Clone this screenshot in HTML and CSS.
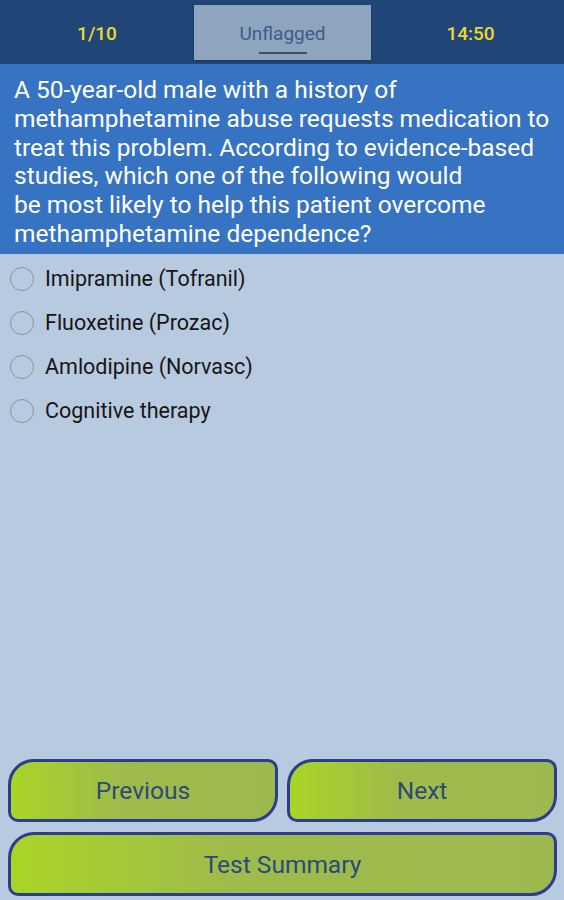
FILE: index.html
```html
<!DOCTYPE html>
<html lang="en">
<head>
  <meta charset="UTF-8" />
  <title>Question 1</title>
  <link rel="stylesheet" href="styles.css">
</head>
<body>
  <header class="topbar">
    <div class="counter">1/10</div>
    <div class="flag-tab">
      <span>Unflagged</span>
      <i class="flag-line"></i>
    </div>
    <div class="counter">14:50</div>
  </header>
  <section class="question">
    A 50-year-old male with a history of<br>
    methamphetamine abuse requests medication to<br>
    treat this problem. According to evidence-based<br>
    studies, which one of the following would<br>
    be most likely to help this patient overcome<br>
    methamphetamine dependence?
  </section>
  <main class="answers">
    <label class="option"><span class="radio"></span>Imipramine (Tofranil)</label>
    <label class="option"><span class="radio"></span>Fluoxetine (Prozac)</label>
    <label class="option"><span class="radio"></span>Amlodipine (Norvasc)</label>
    <label class="option"><span class="radio"></span>Cognitive therapy</label>
  </main>
  <footer class="nav">
    <div class="nav-row">
      <button class="btn">Previous</button>
      <button class="btn">Next</button>
    </div>
    <button class="btn wide">Test Summary</button>
  </footer>
</body>
</html>
```

FILE: styles.css
```css
html, body {
  margin: 0;
  height: 100%;
}
body {
  font-family: Roboto, "Noto Sans", sans-serif;
  background-color: #b8cae0;
  display: flex;
  flex-direction: column;
  height: 900px;
}
.topbar {
  height: 64px;
  flex: none;
  background-color: #1f4677;
  display: grid;
  grid-template-columns: 194px 177px 1fr;
  align-items: center;
}
.counter {
  color: #f2d530;
  font-size: 19px;
  font-weight: 500;
  text-align: center;
  padding-top: 2px;
}
.counter:last-child {
  padding-left: 6px;
}
.flag-tab {
  align-self: stretch;
  margin: 5px 0 4px;
  background-color: #8fa4bf;
  box-shadow: 0 1px 2px rgba(0,0,0,0.3);
  display: flex;
  flex-direction: column;
  align-items: center;
  color: #3b5d88;
  font-size: 19px;
}
.flag-tab span {
  margin-top: 17px;
}
.flag-line {
  width: 48px;
  height: 2px;
  background-color: #3d4e60;
  margin-top: 7px;
}
.question {
  flex: none;
  background-color: #3673c3;
  color: #fff;
  font-size: 24.5px;
  line-height: 28.8px;
  padding: 12px 10px 5px 14px;
  white-space: nowrap;
}
.answers {
  flex: 1;
  display: flex;
  flex-direction: column;
  padding-top: 3px;
}
.option {
  display: flex;
  align-items: center;
  height: 44px;
  padding-left: 10px;
  font-size: 21.5px;
  color: #161616;
}
.radio {
  width: 24px;
  height: 24px;
  border: 1.5px solid #8b939c;
  border-radius: 50%;
  margin-right: 11px;
  box-sizing: border-box;
}
.nav {
  flex: none;
  display: flex;
  flex-direction: column;
  gap: 10px;
  padding: 0 7px 4px 8px;
}
.nav-row {
  display: flex;
  gap: 9px;
}
.btn {
  flex: 1;
  height: 63px;
  border: 3px solid #2b3d8c;
  border-radius: 26px 10px 26px 10px;
  background: linear-gradient(90deg, #a9d526 0%, #9fbb4a 40%, #9db84f 100%);
  color: #2b4a7b;
  font-family: Roboto, "Noto Sans", sans-serif;
  font-size: 24.5px;
  padding: 0;
}
.btn.wide {
  flex: none;
  width: 100%;
  height: 64px;
}
```
